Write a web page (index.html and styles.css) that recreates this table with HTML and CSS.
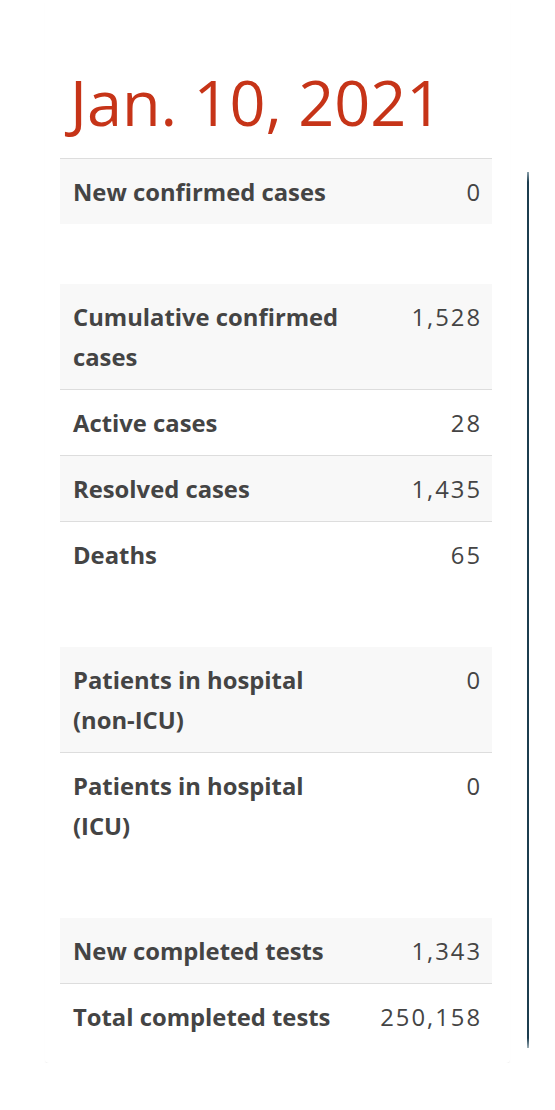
FILE: index.html
```html
<!DOCTYPE html>
<html lang="en">
<head>
    <meta charset="UTF-8">
    <meta name="viewport" content="width=device-width, initial-scale=1.0">
    <title>COVID-19 daily summary</title>
    <link rel="stylesheet" href="styles.css">
</head>
<body>
    <div class="page">
        <div class="card">
            <h1 class="date">Jan. 10, 2021</h1>

            <!-- Cas du jour -->
            <div class="group first">
                <div class="row"><span class="label">New confirmed cases</span><span class="value">0</span></div>
            </div>

            <!-- Cumulatif -->
            <div class="group">
                <div class="row"><span class="label">Cumulative confirmed cases</span><span class="value">1,528</span></div>
                <div class="row"><span class="label">Active cases</span><span class="value">28</span></div>
                <div class="row"><span class="label">Resolved cases</span><span class="value">1,435</span></div>
                <div class="row"><span class="label">Deaths</span><span class="value">65</span></div>
            </div>

            <!-- Hospitalisations -->
            <div class="group">
                <div class="row"><span class="label">Patients in hospital (non-ICU)</span><span class="value">0</span></div>
                <div class="row"><span class="label">Patients in hospital (ICU)</span><span class="value">0</span></div>
            </div>

            <!-- Tests -->
            <div class="group">
                <div class="row"><span class="label">New completed tests</span><span class="value">1,343</span></div>
                <div class="row"><span class="label">Total completed tests</span><span class="value">250,158</span></div>
            </div>
        </div>
        <div class="divider"></div>
    </div>
</body>
</html>
```

FILE: styles.css
```css
body {
    margin: 0;
    background-color: #fff;
    font-family: "Open Sans", "DejaVu Sans", sans-serif;
    color: #444;
}
.page {
    display: flex;
    align-items: flex-start;
}
.card {
    width: 432px;
    margin-left: 45px;
    padding: 62px 18px 14px 15px;
    background: #fff;
    box-shadow: 0 2px 2px -1px rgba(0, 0, 0, 0.12);
    border-radius: 0 0 4px 4px;
}
.date {
    margin: 0 0 16px 10px;
    font-size: 63px;
    line-height: 80px;
    font-weight: 400;
    color: #c63418;
}
.group {
    margin-top: 60px;
}
.group.first {
    margin-top: 0;
    border-top: 1px solid #ddd;
}
.row {
    display: grid;
    grid-template-columns: 1fr 120px;
    align-items: start;
    padding: 12.5px 10px 12.5px 13px;
    font-size: 23.8px;
    line-height: 40px;
    border-bottom: 1px solid #ddd;
}
.row:last-child {
    border-bottom: none;
}
.row:nth-child(odd) {
    background-color: #f8f8f8;
}
.label {
    font-weight: 700;
    padding-right: 16px;
}
.value {
    text-align: right;
    letter-spacing: 2px;
}
.divider {
    width: 2px;
    height: 876px;
    margin: 172px 0 0 17px;
    background: linear-gradient(to bottom, #8aa0ab 0, #1c3d4f 10px, #1c3d4f calc(100% - 10px), #9fb0b8 100%);
}
```
